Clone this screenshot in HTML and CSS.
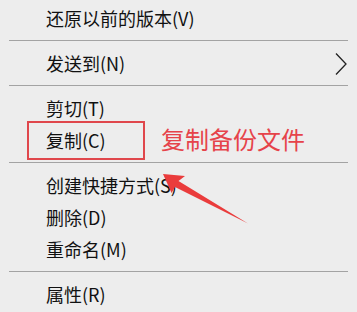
FILE: index.html
```html
<!DOCTYPE html>
<html lang="zh-CN">
<head>
<meta charset="utf-8">
<link rel="stylesheet" href="styles.css">
</head>
<body>
<div class="menu">
  <div class="item">还原以前的版本(V)</div>
  <div class="sep"></div>
  <div class="item sub">发送到(N)
    <svg class="chev" width="12" height="22" viewBox="0 0 12 22"><path d="M1 0.5 L11 11 L1 21.5" fill="none" stroke="#222" stroke-width="1.3"/></svg>
  </div>
  <div class="sep"></div>
  <div class="item">剪切(T)</div>
  <div class="item">复制(C)</div>
  <div class="sep"></div>
  <div class="item">创建快捷方式(S)</div>
  <div class="item">删除(D)</div>
  <div class="item">重命名(M)</div>
  <div class="sep"></div>
  <div class="item">属性(R)</div>

  <div class="mark-box"></div>
  <div class="mark-text">复制备份文件</div>
  <svg class="mark-arrow" width="357" height="312" viewBox="0 0 357 312">
    <polygon points="163,174 185,176 178.5,181 248,223.5 175,187 171.5,193" fill="#ea3c3c"/>
  </svg>
</div>
</body>
</html>
```

FILE: styles.css
```css
html, body {
  margin: 0;
  padding: 0;
  background: #ededed;
}
.menu {
  position: relative;
  width: 357px;
  height: 312px;
  overflow: hidden;
  background: #ededed;
  padding-top: 2px;
  box-sizing: border-box;
  font-family: "Noto Sans CJK SC", "Noto Sans", sans-serif;
  color: #111;
}
.item {
  height: 32px;
  line-height: 32px;
  font-size: 18px;
  padding-left: 46px;
  white-space: nowrap;
  display: flex;
  align-items: center;
}
.sub {
  justify-content: space-between;
  padding-right: 10px;
}
.chev {
  display: block;
  margin-top: 1px;
}
.sep {
  height: 1px;
  background: #a3a3a3;
  margin: 6px 9px 6px 9px;
}
.mark-box {
  position: absolute;
  left: 27px;
  top: 121px;
  width: 118px;
  height: 39px;
  box-sizing: border-box;
  border: 2.5px solid #e0474c;
}
.mark-text {
  position: absolute;
  left: 161px;
  top: 124px;
  font-size: 24px;
  line-height: 30px;
  color: #e6434a;
  white-space: nowrap;
}
.mark-arrow {
  position: absolute;
  left: 0;
  top: 0;
}
```
